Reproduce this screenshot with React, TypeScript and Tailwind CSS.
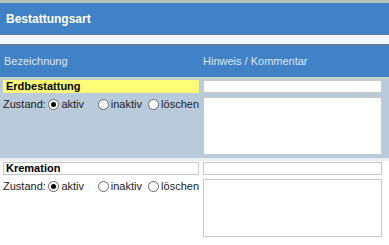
const Radio = ({ checked, label }: { checked?: boolean; label: string }) => (
  <label className="flex items-center gap-[2px]">
    <span className="w-[11px] h-[11px] rounded-full border border-[#666] bg-white flex items-center justify-center">
      {checked && <span className="w-[5px] h-[5px] rounded-full bg-black" />}
    </span>
    <span>{label}</span>
  </label>
);

const Entry = ({ name, highlight }: { name: string; highlight?: boolean }) => (
  <div className={`flex px-[3px] pt-[1px] pb-[3px] gap-[4px] ${highlight ? "bg-[#b9cadb]" : "bg-white"}`}>
    <div className="w-[196px] flex flex-col gap-[3px]">
      <div
        className={`h-[13px] border leading-[11px] px-[2px] font-bold text-[11px] text-black ${
          highlight ? "bg-[#fdfd78] border-[#fdfd78]" : "bg-white border-[#c8c8c8]"
        }`}
      >
        {name}
      </div>
      <div className="flex items-center text-[11px] text-[#222] h-[16px]">
        <span className="w-[46px]">Zustand:</span>
        <div className="w-[50px]">
          <Radio checked label="aktiv" />
        </div>
        <div className="w-[51px]">
          <Radio label="inaktiv" />
        </div>
        <Radio label="löschen" />
      </div>
    </div>
    <div className="w-[179px] flex flex-col gap-[4px]">
      <div className="h-[13px] bg-white border border-[#c8c8c8]" />
      <div className="h-[58px] bg-white border border-[#c8c8c8]" />
    </div>
  </div>
);

export default function App() {
  return (
    <div className="w-[389px] h-[245px] bg-white overflow-hidden font-['Liberation_Sans',Arial,sans-serif]">
      <div className="h-[3px] bg-[#b4c2b8]" />
      <div className="h-[32px] bg-[#4181c5] border-b border-[#5f7f9f] flex items-center px-[6px]">
        <span className="text-white font-bold text-[12px]">Bestattungsart</span>
      </div>
      <div className="h-[9px] bg-[#f3f6fa]" />
      <div className="h-[33px] bg-[#4181c5] border-t-2 border-[#5f7f9f] flex items-center text-[11px] text-[#dce8f5]">
        <span className="w-[203px] pl-[4px]">Bezeichnung</span>
        <span>Hinweis / Kommentar</span>
      </div>
      <div className="h-[2px] bg-[#c9d6c0]" />
      <Entry name="Erdbestattung" highlight />
      <div className="h-[3px] bg-[#e9eef3]" />
      <Entry name="Kremation" />
    </div>
  );
}
